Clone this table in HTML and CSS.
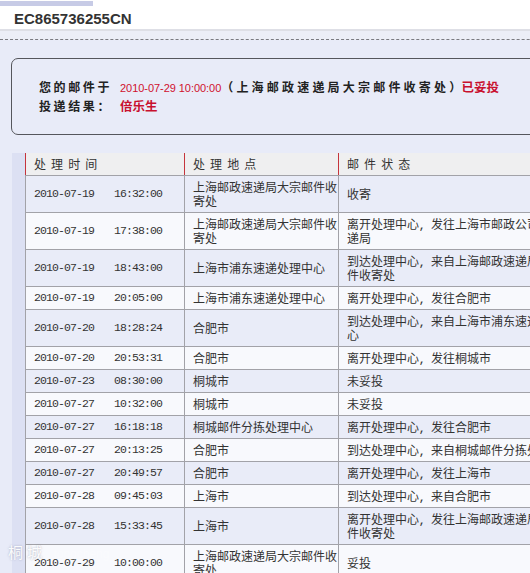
FILE: index.html
```html
<!DOCTYPE html>
<html lang="zh-CN">
<head>
<meta charset="utf-8">
<title>EC865736255CN</title>
<link rel="stylesheet" href="styles.css">
</head>
<body>
<div class="page">
  <div class="topbar"><div class="topbar-fill"></div></div>
  <h1 class="title">EC865736255CN</h1>
  <div class="dash-gap"></div>

  <div class="summary">
    <div class="summary-line">
      <span class="label">您的邮件于</span><span class="date">2010-07-29 10:00:00</span><span class="place">（上海邮政速递局大宗邮件收寄处）</span><span class="status">已妥投</span>
    </div>
    <div class="summary-line">
      <span class="label">投递结果：</span><span class="receiver">倍乐生</span>
    </div>
  </div>

  <div class="table-wrap">
    <table class="track">
      <colgroup><col class="c1"><col class="c2"><col class="c3"></colgroup>
      <thead>
        <tr><th>处 理 时 间</th><th>处 理 地 点</th><th>邮 件 状 态</th></tr>
      </thead>
      <tbody>
        <tr><td class="t"><span class="d">2010-07-19</span><span class="h">16:32:00</span></td><td>上海邮政速递局大宗邮件收寄处</td><td>收寄</td></tr>
        <tr><td class="t"><span class="d">2010-07-19</span><span class="h">17:38:00</span></td><td>上海邮政速递局大宗邮件收寄处</td><td>离开处理中心<span class="sep">, </span>发往上海市邮政公司国际速递局</td></tr>
        <tr><td class="t"><span class="d">2010-07-19</span><span class="h">18:43:00</span></td><td>上海市浦东速递处理中心</td><td>到达处理中心<span class="sep">, </span>来自上海邮政速递局大宗邮件收寄处</td></tr>
        <tr><td class="t"><span class="d">2010-07-19</span><span class="h">20:05:00</span></td><td>上海市浦东速递处理中心</td><td>离开处理中心<span class="sep">, </span>发往合肥市</td></tr>
        <tr><td class="t"><span class="d">2010-07-20</span><span class="h">18:28:24</span></td><td>合肥市</td><td>到达处理中心<span class="sep">, </span>来自上海市浦东速递处理中心</td></tr>
        <tr><td class="t"><span class="d">2010-07-20</span><span class="h">20:53:31</span></td><td>合肥市</td><td>离开处理中心<span class="sep">, </span>发往桐城市</td></tr>
        <tr><td class="t"><span class="d">2010-07-23</span><span class="h">08:30:00</span></td><td>桐城市</td><td>未妥投</td></tr>
        <tr><td class="t"><span class="d">2010-07-27</span><span class="h">10:32:00</span></td><td>桐城市</td><td>未妥投</td></tr>
        <tr><td class="t"><span class="d">2010-07-27</span><span class="h">16:18:18</span></td><td>桐城邮件分拣处理中心</td><td>离开处理中心<span class="sep">, </span>发往合肥市</td></tr>
        <tr><td class="t"><span class="d">2010-07-27</span><span class="h">20:13:25</span></td><td>合肥市</td><td>到达处理中心<span class="sep">, </span>来自桐城邮件分拣处理中心</td></tr>
        <tr><td class="t"><span class="d">2010-07-27</span><span class="h">20:49:57</span></td><td>合肥市</td><td>离开处理中心<span class="sep">, </span>发往上海市</td></tr>
        <tr><td class="t"><span class="d">2010-07-28</span><span class="h">09:45:03</span></td><td>上海市</td><td>到达处理中心<span class="sep">, </span>来自合肥市</td></tr>
        <tr><td class="t"><span class="d">2010-07-28</span><span class="h">15:33:45</span></td><td>上海市</td><td>离开处理中心<span class="sep">, </span>发往上海邮政速递局大宗邮件收寄处</td></tr>
        <tr><td class="t"><span class="d">2010-07-29</span><span class="h">10:00:00</span></td><td>上海邮政速递局大宗邮件收寄处</td><td>妥投</td></tr>
      </tbody>
    </table>
  </div>

  <div class="watermark">桐城 <span class="wm-faint">tongcheng</span></div>
</div>
</body>
</html>
```

FILE: styles.css
```css
html, body {
  margin: 0;
  padding: 0;
  overflow: hidden;
  background: #e8ebf8;
}

.page {
  position: relative;
  width: 640px;
  min-height: 573px;
  background: #e8ebf8;
  font-family: "Noto Sans CJK SC", "Noto Sans", sans-serif;
  color: #222;
}

.topbar {
  height: 8px;
  background: #ffffff;
  padding-top: 1px;
  box-sizing: border-box;
}

.topbar-fill {
  width: 93px;
  height: 5px;
  background: #c7cbe6;
}

.title {
  margin: 0;
  height: 21px;
  padding-left: 14px;
  background: #ffffff;
  border-bottom: 2px solid #dedfe6;
  font-family: "Liberation Sans", Arial, sans-serif;
  font-size: 15px;
  font-weight: bold;
  line-height: 21px;
  color: #333;
}

.dash-gap {
  height: 8px;
  background: #eceef7;
  border-bottom: 1px dashed #7a7a80;
}

.summary {
  margin: 18px 0 0 11px;
  width: 600px;
  border: 1px solid #55565c;
  border-radius: 7px;
  padding: 18px 0 19px 27px;
  display: flex;
  flex-direction: column;
}

.summary-line {
  height: 19px;
  line-height: 19px;
  font-size: 12px;
  white-space: nowrap;
}

.label {
  font-weight: bold;
  letter-spacing: 2.6px;
  color: #222;
  margin-right: 8px;
}

.date {
  font-family: "Liberation Sans", Arial, sans-serif;
  font-size: 11px;
  letter-spacing: -0.05px;
  color: #d0102e;
}

.place {
  font-weight: bold;
  letter-spacing: 3.2px;
  color: #222;
}

.status, .receiver {
  font-weight: bold;
  color: #c8102e;
  font-size: 12.5px;
}

.status { margin-left: -3px; }

.table-wrap {
  margin: 18px 0 0 12px;
  padding-left: 13px;
  background: #dce0f3;
  padding-bottom: 40px;
}

.track {
  border-collapse: collapse;
  table-layout: fixed;
  width: 556px;
  font-size: 12px;
  color: #333;
}

.c1 { width: 159px; }
.c2 { width: 154px; }
.c3 { width: 243px; }

.track th,
.track td {
  padding: 4px 0 4px 8px;
  line-height: 14px;
  text-align: left;
  vertical-align: middle;
  border: 1px solid #a2a2a8;
}

.track th {
  background: #efeff0;
  font-weight: normal;
  letter-spacing: 1.2px;
  color: #333;
  border-top: none;
  border-left: 1px solid #c5343c;
  border-right: 1px solid #c5343c;
  height: 14px;
}

.track tbody tr:nth-child(odd) td { background: #e9ecf8; }
.track tbody tr:nth-child(even) td { background: #f8f9fd; }

.t {
  white-space: nowrap;
  font-family: "Liberation Mono", monospace;
  font-size: 11.5px;
  letter-spacing: -0.9px;
  color: #333;
}

.t .h { margin-left: 20px; }

.sep {
  font-family: "Liberation Mono", monospace;
  font-size: 10px;
  line-height: 0;
  white-space: pre;
  font-weight: bold;
}

.watermark {
  position: absolute;
  left: 8px;
  top: 541px;
  font-size: 15px;
  color: rgba(255, 255, 255, 0.95);
  letter-spacing: 4px;
  text-shadow: 0 0 2px rgba(120, 125, 150, 0.55);
}

.wm-faint {
  font-family: "Liberation Sans", Arial, sans-serif;
  font-size: 12px;
  letter-spacing: 0;
  color: rgba(255, 255, 255, 0.35);
  text-shadow: none;
}
```
